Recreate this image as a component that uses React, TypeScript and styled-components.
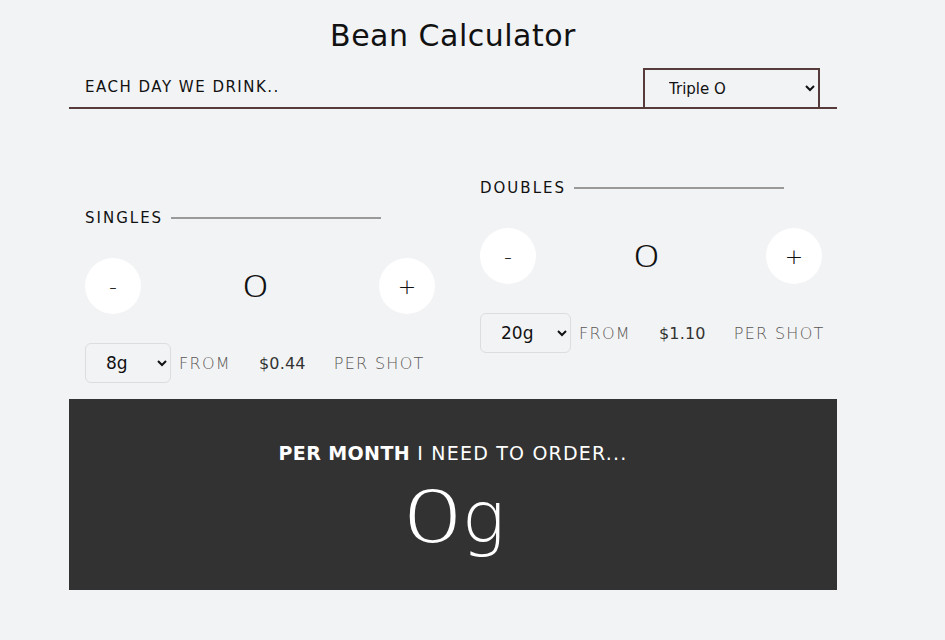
import { useState } from "react";
import styled, { createGlobalStyle } from "styled-components";

const GlobalStyle = createGlobalStyle`
  body {
    margin: 0;
    background: #f2f3f5;
    font-family: "DejaVu Sans", "Liberation Sans", sans-serif;
    color: #111;
  }
`;

const Page = styled.main`
  width: 768px;
  margin-left: 69px;
`;

const Title = styled.h1`
  margin: 0;
  padding: 18px 0 14px;
  text-align: center;
  font-size: 30px;
  font-weight: 400;
  line-height: 36px;
  letter-spacing: 0.5px;
  color: #111;
`;

const DrinkBar = styled.div`
  display: flex;
  align-items: flex-end;
  justify-content: space-between;
  padding: 0 17px 0 16px;
  border-bottom: 2px solid #573b3b;
`;

const DrinkLabel = styled.span`
  font-size: 15px;
  letter-spacing: 1.5px;
  padding-bottom: 11px;
`;

const DrinkSelect = styled.select`
  width: 177px;
  height: 41px;
  margin-bottom: -2px;
  padding: 0 0 0 20px;
  border: 2px solid #573b3b;
  border-radius: 0;
  background: #f2f3f5;
  font-family: inherit;
  font-size: 15px;
  color: #111;
`;

const Sections = styled.section`
  display: grid;
  grid-template-columns: 350px 342px;
  column-gap: 45px;
  padding: 69px 0 16px 16px;
`;

const Column = styled.div<{ $offset: number }>`
  display: flex;
  flex-direction: column;
  margin-top: ${(p) => p.$offset}px;
`;

const Heading = styled.div`
  display: flex;
  align-items: center;
  height: 20px;
  font-size: 15px;
  letter-spacing: 2px;
`;

const Rule = styled.span`
  width: 210px;
  height: 2px;
  margin-left: 8px;
  background: #9a9a9a;
`;

const Counter = styled.div`
  display: flex;
  align-items: center;
  justify-content: space-between;
  margin-top: 30px;
`;

const RoundButton = styled.button`
  width: 56px;
  height: 56px;
  border: none;
  border-radius: 50%;
  background: #fff;
  font-family: inherit;
  font-size: 22px;
  font-weight: 300;
  color: #111;
  cursor: pointer;
`;

const Count = styled.span`
  display: inline-block;
  font-size: 30px;
  font-weight: 300;
  margin-right: 8px;
  transform: scaleX(1.55);
`;

const PriceRow = styled.div`
  display: flex;
  align-items: center;
  margin-top: 29px;
`;

const SizeSelect = styled.select<{ $w: number }>`
  flex-shrink: 0;
  width: ${(p) => p.$w}px;
  height: 40px;
  padding-left: 16px;
  border: 1px solid #dcdde0;
  border-radius: 6px;
  background: #f2f3f5;
  font-family: inherit;
  font-size: 17px;
  color: #111;
`;

const PriceLine = styled.div`
  display: flex;
  gap: 28px;
  margin-left: 8px;
  font-size: 16px;
  letter-spacing: 1.3px;
  white-space: nowrap;
`;

const Muted = styled.span`
  color: #595653;
  font-weight: 300;
`;

const Price = styled.span`
  color: #333;
  letter-spacing: 0.2px;
`;

const Result = styled.section`
  height: 191px;
  background: #323232;
  color: #fff;
  text-align: center;
  padding-top: 42px;
  box-sizing: border-box;
`;

const ResultText = styled.p`
  margin: 0;
  font-size: 19px;
  line-height: 24px;
  letter-spacing: 1.2px;
  b {
    font-weight: 700;
    letter-spacing: 0.4px;
  }
`;

const Total = styled.div`
  margin-top: 12px;
  font-size: 72px;
  line-height: 80px;
  font-weight: 300;
`;

const Digit = styled.span`
  display: inline-block;
  margin: 0 6px 0 9px;
  transform: scaleX(1.4);
`;

interface ShotProps {
  label: string;
  offset: number;
  sizes: string[];
  price: string;
  selectWidth: number;
}

const ShotColumn = ({ label, offset, sizes, price, selectWidth }: ShotProps) => {
  const [count, setCount] = useState(0);
  return (
    <Column $offset={offset}>
      <Heading>
        {label}
        <Rule />
      </Heading>
      <Counter>
        <RoundButton onClick={() => setCount(Math.max(0, count - 1))}>-</RoundButton>
        <Count>{count}</Count>
        <RoundButton onClick={() => setCount(count + 1)}>+</RoundButton>
      </Counter>
      <PriceRow>
        <SizeSelect $w={selectWidth}>
          {sizes.map((s) => (
            <option key={s}>{s}</option>
          ))}
        </SizeSelect>
        <PriceLine>
          <Muted>FROM</Muted>
          <Price>{price}</Price>
          <Muted>PER SHOT</Muted>
        </PriceLine>
      </PriceRow>
    </Column>
  );
};

const App = () => {
  const total = 0;
  return (
    <>
      <GlobalStyle />
      <Page>
        <Title>Bean Calculator</Title>
        <DrinkBar>
          <DrinkLabel>EACH DAY WE DRINK..</DrinkLabel>
          <DrinkSelect defaultValue="Triple O">
            <option>Single O</option>
            <option>Double O</option>
            <option>Triple O</option>
          </DrinkSelect>
        </DrinkBar>
        <Sections>
          <ShotColumn label="SINGLES" offset={30} sizes={["8g", "10g", "12g"]} price="$0.44" selectWidth={86} />
          <ShotColumn label="DOUBLES" offset={0} sizes={["20g", "18g", "22g"]} price="$1.10" selectWidth={91} />
        </Sections>
        <Result>
          <ResultText>
            <b>PER MONTH</b> I NEED TO ORDER...
          </ResultText>
          <Total>
            <Digit>{total}</Digit>g
          </Total>
        </Result>
      </Page>
    </>
  );
};

export default App;
